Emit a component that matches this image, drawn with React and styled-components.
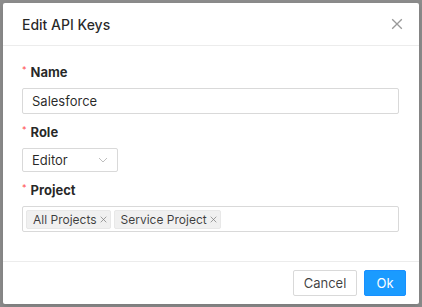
import React from "react";
import styled, { createGlobalStyle } from "styled-components";

const Global = createGlobalStyle`
  html, body { margin: 0; padding: 0; }
  body {
    width: 422px; height: 307px; overflow: hidden;
    background: #8c8c8c;
    font-family: Inter, "Open Sans", sans-serif;
    color: rgba(0,0,0,0.85);
  }
  * { box-sizing: border-box; }
`;

const Overlay = styled.div`
  width: 422px;
  height: 307px;
  padding: 3px;
`;

const Modal = styled.div`
  width: 416px;
  height: 301px;
  background: #fff;
  border-radius: 2px;
  display: flex;
  flex-direction: column;
  box-shadow: 0 3px 6px rgba(0,0,0,0.12);
`;

const Header = styled.div`
  height: 43px;
  padding: 0 19px;
  display: flex;
  align-items: center;
  justify-content: space-between;
  border-bottom: 1px solid #ececec;
  flex: none;
`;

const Title = styled.div`
  font-size: 14px;
  font-weight: 500;
  color: rgba(0,0,0,0.85);
`;

const Close = styled.button`
  border: 0;
  background: none;
  padding: 0;
  width: 14px;
  height: 14px;
  display: flex;
  align-items: center;
  justify-content: center;
  margin-right: -4px;
`;

const Body = styled.div`
  flex: 1;
  padding: 18px 19px 0 19px;
  display: flex;
  flex-direction: column;
`;

const Label = styled.div`
  font-size: 13px;
  font-weight: 700;
  height: 16px;
  line-height: 16px;
  display: flex;
  align-items: center;
  margin-bottom: 8px;
  color: rgba(0,0,0,0.85);
`;

const Star = styled.span`
  color: #ff4d4f;
  font-size: 9px;
  font-weight: 400;
  margin-right: 4px;
  align-self: flex-start;
  line-height: 12px;
`;

const Input = styled.div`
  width: 377px;
  height: 26px;
  border: 1px solid #d9d9d9;
  border-radius: 2px;
  padding: 0 9px;
  font-size: 13px;
  display: flex;
  align-items: center;
  margin-bottom: ${p => p.$mb || 0}px;
`;

const Select = styled.div`
  width: 96px;
  height: 24px;
  border: 1px solid #d9d9d9;
  border-radius: 2px;
  padding: 0 9px;
  font-size: 13px;
  display: flex;
  align-items: center;
  justify-content: space-between;
  margin-bottom: ${p => p.$mb || 0}px;
`;

const Multi = styled.div`
  width: 377px;
  height: 26px;
  border: 1px solid #d9d9d9;
  border-radius: 2px;
  padding: 0 3px;
  display: flex;
  align-items: center;
  gap: 3px;
`;

const Tag = styled.div`
  height: 19px;
  background: #f0f0f0;
  border: 1px solid #e8e8e8;
  border-radius: 2px;
  padding: 0 3px 0 6px;
  font-size: 12px;
  display: flex;
  align-items: center;
  gap: 3px;
  color: rgba(0,0,0,0.75);
`;

const Footer = styled.div`
  height: 43px;
  border-top: 1px solid #ececec;
  flex: none;
  display: flex;
  justify-content: flex-end;
  align-items: center;
  gap: 7px;
  padding: 0 13px 0 0;
`;

const Button = styled.button`
  height: 26px;
  width: ${p => p.$w}px;
  padding: 0;
  border-radius: 2px;
  font-family: inherit;
  font-size: 13px;
  border: 1px solid ${p => (p.$primary ? "#1890ff" : "#d9d9d9")};
  background: ${p => (p.$primary ? "#1a9bff" : "#fff")};
  color: ${p => (p.$primary ? "#fff" : "rgba(0,0,0,0.75)")};
`;

const X = ({ size = 8, color = "#8c8c8c", w = 1 }) => (
  <svg width={size} height={size} viewBox="0 0 10 10">
    <path d="M1 1L9 9M9 1L1 9" stroke={color} strokeWidth={w} fill="none" />
  </svg>
);

export default function App() {
  return (
    <>
      <Global />
      <Overlay>
        <Modal>
          <Header>
            <Title>Edit API Keys</Title>
            <Close><X size={12} color="#999" w={1.1} /></Close>
          </Header>
          <Body>
            <Label><Star>*</Star>Name</Label>
            <Input $mb={10}>Salesforce</Input>
            <Label><Star>*</Star>Role</Label>
            <Select $mb={10}>
              Editor
              <svg width="10" height="6" viewBox="0 0 10 6">
                <path d="M1 1L5 5L9 1" stroke="#bfbfbf" strokeWidth="1" fill="none" />
              </svg>
            </Select>
            <Label><Star>*</Star>Project</Label>
            <Multi>
              <Tag>All Projects <X size={7} color="#777" /></Tag>
              <Tag>Service Project <X size={7} color="#777" /></Tag>
            </Multi>
          </Body>
          <Footer>
            <Button $w={64}>Cancel</Button>
            <Button $primary $w={42}>Ok</Button>
          </Footer>
        </Modal>
      </Overlay>
    </>
  );
}
